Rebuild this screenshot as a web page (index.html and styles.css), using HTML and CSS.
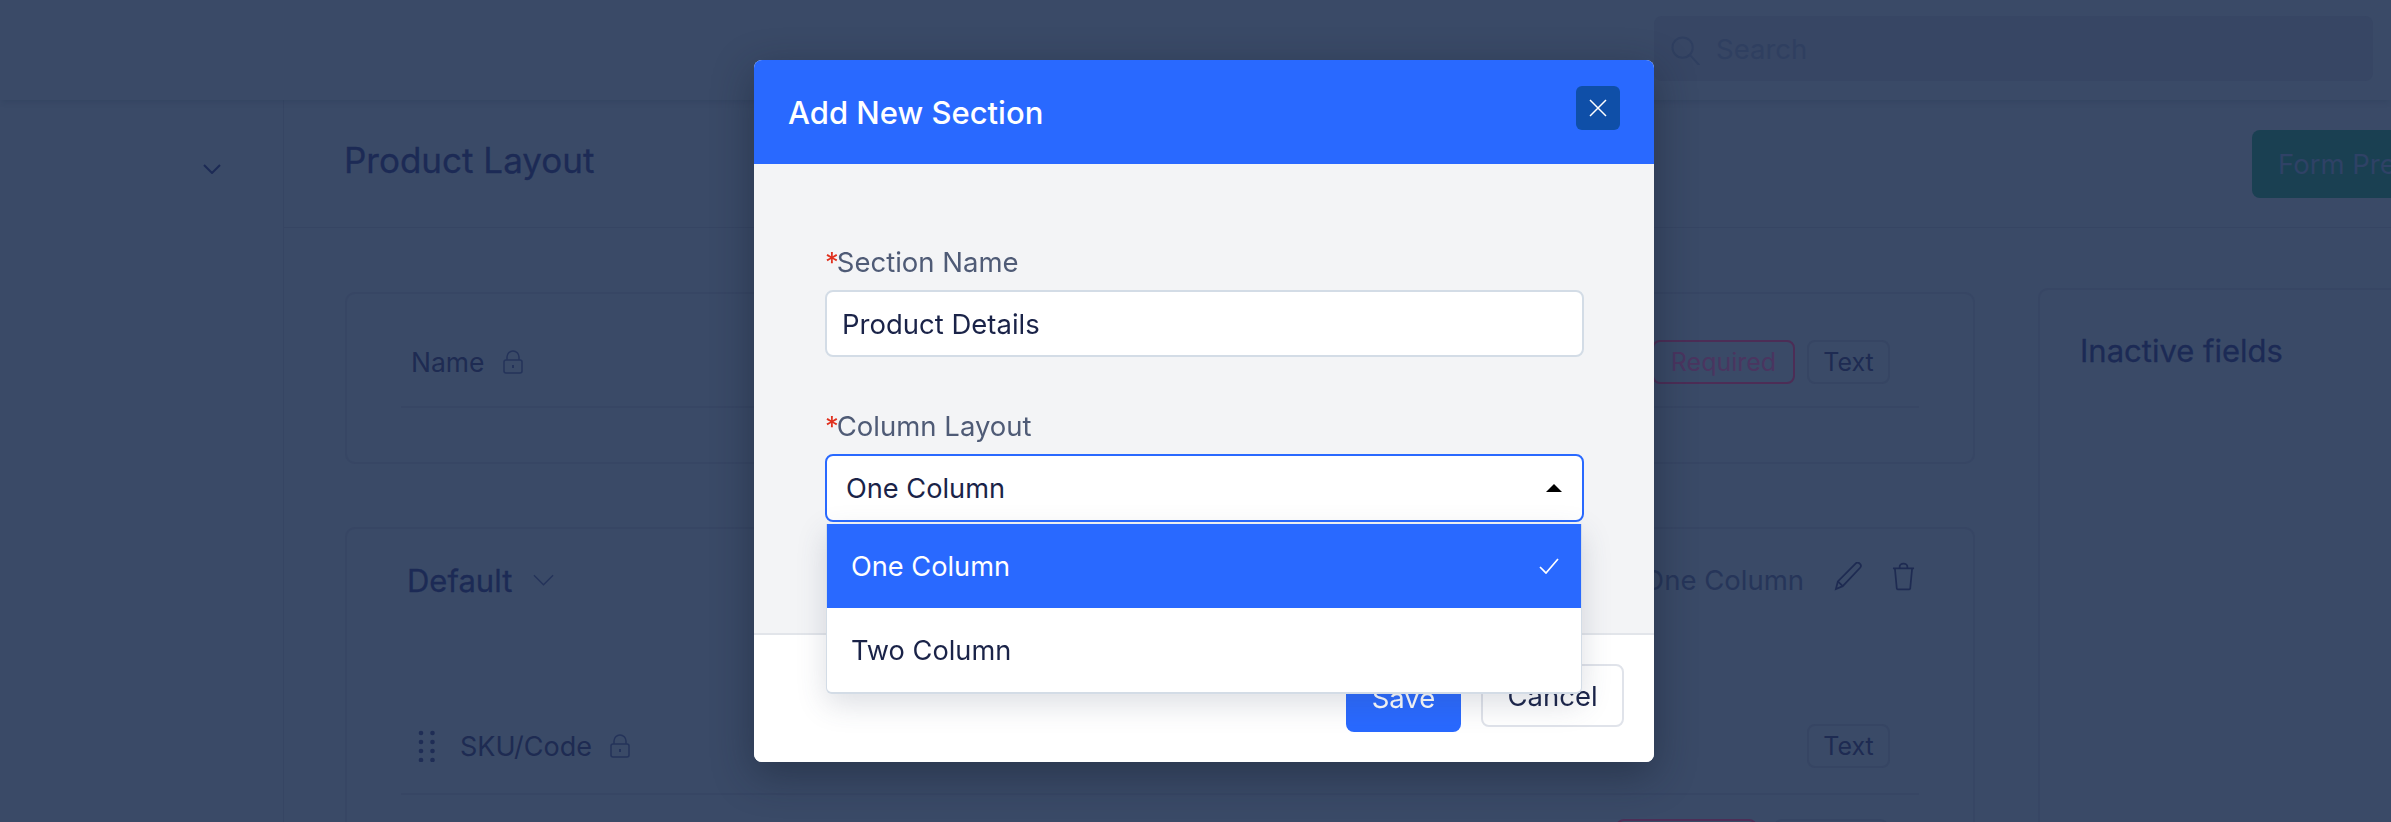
FILE: index.html
```html
<!DOCTYPE html>
<html lang="en">
<head>
<meta charset="utf-8">
<title>Product Layout</title>
<link rel="stylesheet" href="styles.css">
</head>
<body>
<div class="page">
  <header class="topbar">
    <div class="search">
      <svg class="search-icon" viewBox="0 0 30 30" fill="none" stroke="currentColor" stroke-width="2"><circle cx="12" cy="12" r="10.5"/><path d="M19.5 19.5 L29 30" stroke-linecap="round"/></svg>
      <span>Search</span>
    </div>
  </header>
  <div class="main">
    <aside class="sidebar">
      <svg class="side-chevron" viewBox="0 0 18 10" fill="none" stroke="currentColor" stroke-width="2"><path d="M1 1 L9 9 L17 1"/></svg>
    </aside>
    <section class="content">
      <div class="content-head">
        <h1 class="title">Product Layout</h1>
        <button class="preview">Form Preview</button>
      </div>
      <div class="content-body">
        <div class="cards">
          <div class="card card-name">
            <div class="row">
              <span class="field">Name</span>
              <svg class="lock" viewBox="0 0 20 24" fill="none" stroke="currentColor" stroke-width="1.5"><rect x="1" y="10" width="18" height="13" rx="2"/><path d="M4 10 V7 a6 6 0 0 1 12 0 V10"/><path d="M10 15 v3" stroke-width="2"/></svg>
              <span class="tags"><span class="tag tag-req">Required</span><span class="tag">Text</span></span>
            </div>
          </div>
          <div class="card card-default">
            <div class="section-head">
              <span class="section-title">Default</span>
              <svg class="section-chevron" viewBox="0 0 22 12" fill="none" stroke="currentColor" stroke-width="1.4"><path d="M1 1 L11 11 L21 1"/></svg>
              <span class="section-layout">One Column</span>
              <svg class="pencil" viewBox="0 0 30 30" fill="none" stroke="currentColor" stroke-width="1.8"><path d="M2 28 L4 20 L22 2 a3 3 0 0 1 5 4 L9 25 Z"/><path d="M4 20 L9 25"/></svg>
              <svg class="trash" viewBox="0 0 24 29" fill="none" stroke="currentColor" stroke-width="1.8"><path d="M1 6 H23"/><path d="M8 6 V4 a4 3 0 0 1 8 0 V6"/><path d="M3 6 L5 27 a1.5 1.5 0 0 0 1.5 1 H17.5 a1.5 1.5 0 0 0 1.5 -1 L21 6"/></svg>
            </div>
            <div class="row row-sku">
              <svg class="grip" viewBox="0 0 17 32" fill="currentColor"><circle cx="3" cy="3" r="2.3"/><circle cx="14.5" cy="3" r="2.3"/><circle cx="3" cy="12" r="2.3"/><circle cx="14.5" cy="12" r="2.3"/><circle cx="3" cy="21" r="2.3"/><circle cx="14.5" cy="21" r="2.3"/><circle cx="3" cy="30" r="2.3"/><circle cx="14.5" cy="30" r="2.3"/></svg>
              <span class="field">SKU/Code</span>
              <svg class="lock" viewBox="0 0 20 24" fill="none" stroke="currentColor" stroke-width="1.5"><rect x="1" y="10" width="18" height="13" rx="2"/><path d="M4 10 V7 a6 6 0 0 1 12 0 V10"/><path d="M10 15 v3" stroke-width="2"/></svg>
              <span class="tags"><span class="tag">Text</span></span>
            </div>
            <div class="row row-next">
              <span class="tags tags-next"><span class="tag tag-req tag-wide"></span><span class="tag tag-next"></span></span>
            </div>
          </div>
        </div>
        <aside class="inactive">
          <h2 class="inactive-title">Inactive fields</h2>
        </aside>
      </div>
    </section>
  </div>
</div>

<div class="overlay">
  <div class="modal">
    <div class="modal-head">
      <h2 class="modal-title">Add New Section</h2>
      <button class="close" aria-label="Close">
        <svg viewBox="0 0 18 18" fill="none" stroke="currentColor" stroke-width="1.5"><path d="M1 1 L17 17 M17 1 L1 17"/></svg>
      </button>
    </div>
    <div class="modal-body">
      <label class="label"><span class="star">*</span>Section Name</label>
      <div class="input">Product Details</div>
      <label class="label label-second"><span class="star">*</span>Column Layout</label>
      <div class="select">
        <span>One Column</span>
        <span class="arrow"></span>
        <div class="dropdown">
          <div class="option option-active">
            <span>One Column</span>
            <svg class="check" viewBox="0 0 20 16" fill="none" stroke="currentColor" stroke-width="1.7"><path d="M1 9 L7 15 L19 1"/></svg>
          </div>
          <div class="option">Two Column</div>
        </div>
      </div>
    </div>
    <div class="modal-foot">
      <button class="btn btn-save">Save</button>
      <button class="btn btn-cancel">Cancel</button>
    </div>
  </div>
</div>
</body>
</html>
```

FILE: styles.css
```css
* { box-sizing: border-box; }
html, body { margin: 0; height: 100%; overflow: hidden; }
body {
  background: #3a4a67;
  font-family: Inter, "Liberation Sans", sans-serif;
  color: #1c2a55;
}
h1, h2 { margin: 0; font-weight: 500; }
button { font-family: inherit; }

.page { width: 2391px; height: 822px; overflow: hidden; }

.topbar {
  height: 100px;
  display: flex;
  justify-content: flex-end;
  padding: 16px 18px 0 0;
  box-shadow: 0 4px 5px -2px rgba(40, 55, 85, .3);
  position: relative;
}
.search {
  width: 719px;
  height: 65px;
  background: #374664;
  border-radius: 8px;
  display: flex;
  align-items: center;
  gap: 16px;
  padding-left: 17px;
  color: #2f3f60;
  font-size: 27.5px;
}
.search-icon { width: 29px; height: 29px; margin-top: 4px; }

.main { display: flex; width: 2650px; height: 722px; }
.sidebar {
  width: 284px;
  flex: none;
  border-right: 1px solid #364563;
  padding: 64px 0 0 203px;
}
.side-chevron { display: block; width: 18px; height: 10px; color: #1c2a55; }

.content { flex: 1; min-width: 0; }
.content-head {
  height: 128px;
  border-bottom: 1px solid #364563;
  display: flex;
  align-items: center;
  justify-content: space-between;
  padding: 0 168px 0 60px;
}
.title { font-size: 35px; font-weight: 400; color: #1c2a55; margin-top: -8px; -webkit-text-stroke: .3px #1c2a55; }
.preview {
  width: 230px;
  height: 68px;
  border: 0;
  background: #1a4052;
  border-radius: 8px;
  color: #2f4266;
  font-size: 27.5px;
  font-weight: 400;
  text-align: left;
  padding: 0 0 0 26px;
  white-space: nowrap;
}

.content-body { display: flex; padding: 64px 0 0 61px; gap: 63px; align-items: flex-start; }
.cards { width: 1630px; flex: none; display: flex; flex-direction: column; gap: 63px; }
.card { border: 2px solid #374664; border-radius: 10px; }
.card-name { height: 172px; padding: 36px 54px 0 54px; }
.card-default { height: 420px; padding: 0 54px; }

.row {
  display: flex;
  align-items: center;
  height: 78px;
  padding-bottom: 13px;
  border-bottom: 2px solid #374664;
  font-size: 26.5px;
  color: #1e2b52;
}
.field { padding-left: 10px; }
.lock { width: 20px; height: 24px; margin-left: 18px; color: #24335a; }
.tags { margin-left: auto; margin-right: 29px; display: flex; gap: 12px; }
.tag {
  height: 44px;
  width: 83px;
  border: 2px solid #364563;
  border-radius: 8px;
  display: flex;
  align-items: center;
  justify-content: center;
  font-size: 25px;
  color: #1e2b52;
}
.tag-req { border-color: #4c2d56; color: #4a3560; width: 143px; }
.tags-next { margin-right: 31px; gap: 17px; }
.tag-wide { width: 141px; }
.tag-next { width: 114px; }

.section-head {
  display: flex;
  align-items: center;
  height: 102px;
}
.section-title { font-size: 31px; color: #1c2a55; margin-left: 6px; -webkit-text-stroke: .3px #1c2a55; }
.section-chevron { width: 21px; height: 12px; margin-left: 21px; color: #24335a; }
.section-layout { margin-left: auto; font-size: 27.5px; color: #263559; }
.pencil { width: 29px; height: 29px; margin-left: 30px; margin-top: -8px; color: #1e2b52; }
.trash { width: 23px; height: 29px; margin-left: 29px; margin-right: 4px; margin-top: -8px; color: #1e2b52; }

.row-sku { margin-top: 77px; height: 87px; padding-bottom: 9px; font-size: 27px; }
.grip { width: 17px; height: 32px; margin-left: 17px; color: #1f2d55; }
.row-sku .field { padding-left: 25px; }
.row-next { border-bottom: 0; padding-top: 24px; align-items: flex-start; }

.inactive {
  width: 600px;
  height: 600px;
  margin-top: -4px;
  border: 2px solid #374664;
  border-radius: 10px 0 0 0;
  padding: 42px 0 0 40px;
}
.inactive-title { font-size: 31px; font-weight: 400; color: #1c2a55; -webkit-text-stroke: .3px #1c2a55; }

/* Modal layer */
.overlay {
  position: fixed;
  inset: 0;
  padding: 60px 0 0 754px;
}
.modal {
  width: 900px;
  height: 702px;
  border-radius: 8px;
  background: #fff;
  display: flex;
  flex-direction: column;
  box-shadow: 0 12px 40px rgba(20, 28, 45, .45);
}
.modal-head {
  height: 104px;
  flex: none;
  background: #2969ff;
  border-radius: 8px 8px 0 0;
  display: flex;
  justify-content: space-between;
  padding: 26px 34px 0 34px;
}
.modal-title { font-size: 31px; color: #fff; line-height: 44px; margin-top: 5px; }
.close {
  width: 44px;
  height: 44px;
  border: 0;
  padding: 0;
  border-radius: 6px;
  background: #0f4fa8;
  color: #fff;
  display: flex;
  align-items: center;
  justify-content: center;
}
.close svg { width: 18px; height: 18px; }

.modal-body {
  height: 469px;
  flex: none;
  background: #f3f4f6;
  padding: 79px 71px 0;
}
.label {
  display: block;
  font-size: 27.5px;
  line-height: 38px;
  margin-bottom: 9px;
  color: #4f5b76;
}
.label-second { margin-top: 50px; }
.star { color: #e0301e; margin-right: -2px; }
.input, .select {
  width: 759px;
  height: 67px;
  background: #fff;
  border: 2px solid #d3dce6;
  border-radius: 8px;
  display: flex;
  align-items: center;
  font-size: 27.5px;
  color: #1a2348;
}
.input { padding-left: 15px; }
.select {
  height: 68px;
  position: relative;
  border-color: #2969ff;
  padding: 0 20px 0 19px;
  justify-content: space-between;
  font-size: 27.2px;
}
.arrow {
  width: 0;
  height: 0;
  border-left: 8px solid transparent;
  border-right: 8px solid transparent;
  border-bottom: 8px solid #000;
}
.dropdown {
  position: absolute;
  top: 68px;
  left: -1px;
  right: 0;
  background: #fff;
  border-bottom: 2px solid #d3dce6;
  border-left: 1px solid #d3dce6;
  border-right: 1px solid #d3dce6;
  border-radius: 0 0 6px 6px;
  box-shadow: 0 10px 30px rgba(60, 72, 100, .18);
}
.option {
  height: 84px;
  display: flex;
  align-items: center;
  justify-content: space-between;
  padding: 0 22px 0 24px;
  color: #1a2348;
}
.option-active { background: #2969ff; color: #fff; }
.check { width: 20px; height: 16px; }

.modal-foot {
  flex: 1;
  background: #fff;
  border-top: 2px solid #e2e5ea;
  border-radius: 0 0 8px 8px;
  display: flex;
  justify-content: flex-end;
  align-items: flex-start;
  gap: 20px;
  padding: 29px 30px 0 0;
}
.btn { font-size: 27.5px; font-weight: 400; border-radius: 8px; }
.btn-save {
  width: 115px;
  height: 63px;
  margin-top: 5px;
  padding: 0 0 5px;
  background: #2969ff;
  border: 0;
  color: #fff;
}
.btn-cancel {
  width: 143px;
  height: 63px;
  padding: 0;
  background: #fff;
  border: 2px solid #e0e3ea;
  color: #1a2348;
}
```
